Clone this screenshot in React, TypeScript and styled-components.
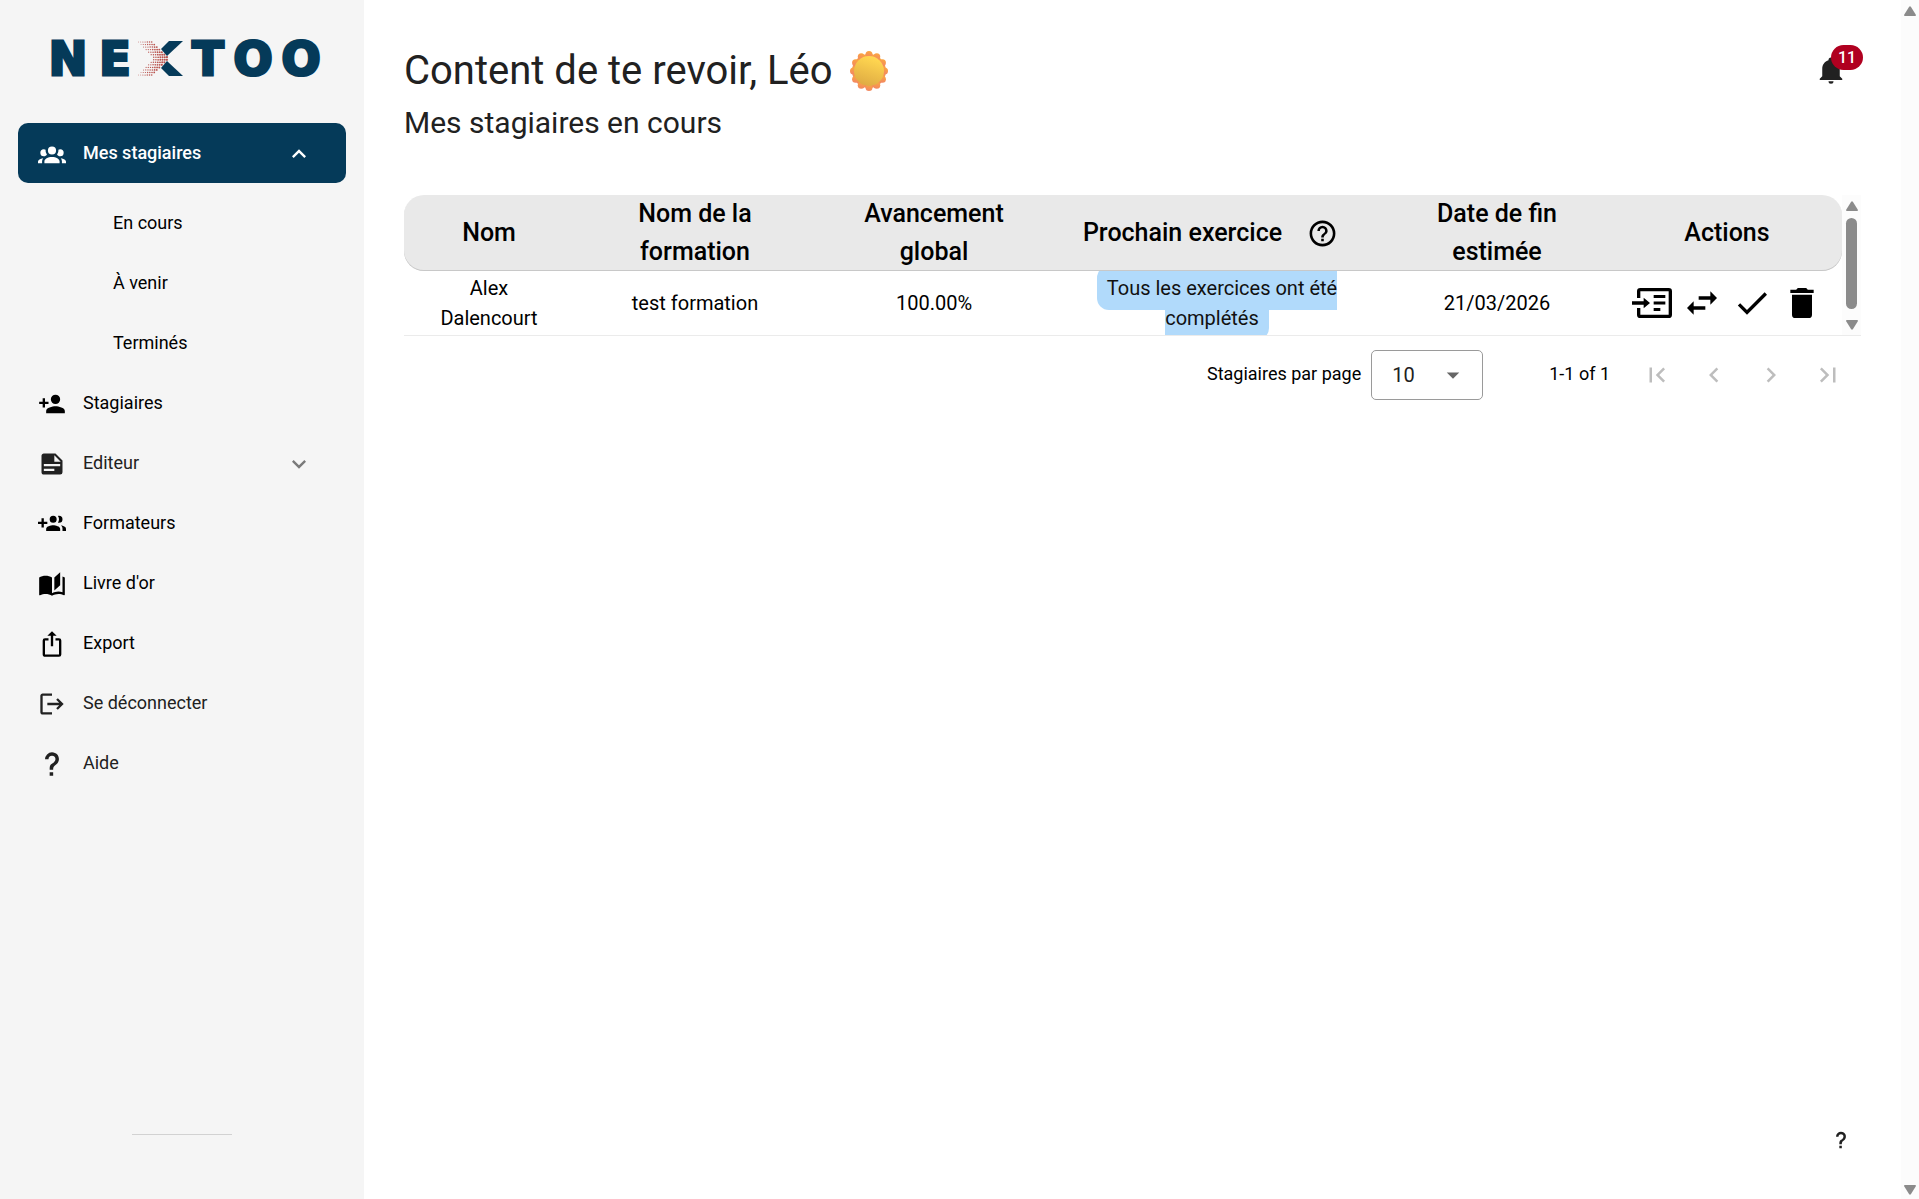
import React from "react";
import styled, { createGlobalStyle } from "styled-components";

const GlobalStyle = createGlobalStyle`
  *, *::before, *::after { box-sizing: border-box; }
  body {
    margin: 0;
    background: #ffffff;
    color: #000000;
    font-family: Roboto, "Liberation Sans", sans-serif;
    overflow: hidden;
  }
  button, select { font-family: inherit; }
`;

/* Material Design icon outlines, drawn on a 24 unit grid */
const icons = {
  group:
    "M12,5.5A3.5,3.5 0 0,1 15.5,9A3.5,3.5 0 0,1 12,12.5A3.5,3.5 0 0,1 8.5,9A3.5,3.5 0 0,1 12,5.5M5,8C5.56,8 6.08,8.15 6.53,8.42C6.38,9.85 6.8,11.27 7.66,12.38C7.16,13.34 6.16,14 5,14A3,3 0 0,1 2,11A3,3 0 0,1 5,8M19,8A3,3 0 0,1 22,11A3,3 0 0,1 19,14C17.84,14 16.84,13.34 16.34,12.38C17.2,11.27 17.62,9.85 17.47,8.42C17.92,8.15 18.44,8 19,8M5.5,18.25C5.5,16.18 8.41,14.5 12,14.5C15.59,14.5 18.5,16.18 18.5,18.25V20H5.5V18.25M0,20V18.5C0,17.11 1.89,15.94 4.45,15.6C3.86,16.28 3.5,17.22 3.5,18.25V20H0M24,20H20.5V18.25C20.5,17.22 20.14,16.28 19.55,15.6C22.11,15.94 24,17.11 24,18.5V20Z",
  accountPlus:
    "M15,14C12.33,14 7,15.33 7,18V20H23V18C23,15.33 17.67,14 15,14M6,10V7H4V10H1V12H4V15H6V12H9V10M15,12A4,4 0 0,0 19,8A4,4 0 0,0 15,4A4,4 0 0,0 11,8A4,4 0 0,0 15,12Z",
  note: "M14,10H19.5L14,4.5V10M5,3H15L21,9V19A2,2 0 0,1 19,21H5C3.89,21 3,20.1 3,19V5C3,3.89 3.89,3 5,3M5,12V14H19V12H5M5,16V18H14V16H5Z",
  groupPlus:
    "M13,13C11,13 7,14 7,16V18H19V16C19,14 15,13 13,13M19.62,13.16C20.45,13.88 21,14.82 21,16V18H24V16C24,14.46 21.63,13.5 19.62,13.16M13,11A3,3 0 0,0 16,8A3,3 0 0,0 13,5A3,3 0 0,0 10,8A3,3 0 0,0 13,11M18,11A3,3 0 0,0 21,8A3,3 0 0,0 18,5C17.68,5 17.37,5.05 17.08,5.14C17.65,5.95 18,6.94 18,8C18,9.06 17.65,10.04 17.08,10.85C17.37,10.95 17.68,11 18,11M8,10H5V7H3V10H0V12H3V15H5V12H8V10Z",
  book: "M19,2L14,6.5V17.5L19,13V2M6.5,5C4.55,5 2.45,5.4 1,6.5V21.16C1,21.41 1.25,21.66 1.5,21.66C1.6,21.66 1.65,21.59 1.75,21.59C3.1,20.94 5.05,20.5 6.5,20.5C8.45,20.5 10.55,20.9 12,22C13.35,21.15 15.8,20.5 17.5,20.5C19.15,20.5 20.85,20.81 22.25,21.56C22.35,21.61 22.4,21.59 22.5,21.59C22.75,21.59 23,21.34 23,21.09V6.5C22.4,6.05 21.75,5.75 21,5.5V19C19.9,18.65 18.7,18.5 17.5,18.5C15.8,18.5 13.35,19.15 12,20V6.5C10.55,5.4 8.45,5 6.5,5Z",
  exportUp:
    "M12,1L8,5H11V14H13V5H16M18,23H6C4.89,23 4,22.1 4,21V9A2,2 0 0,1 6,7H9V9H6V21H18V9H15V7H18A2,2 0 0,1 20,9V21A2,2 0 0,1 18,23Z",
  logout:
    "M17 7L15.59 8.41L18.17 11H8V13H18.17L15.59 15.58L17 17L22 12M4 5H12V3H4C2.9 3 2 3.9 2 5V19C2 20.1 2.9 21 4 21H12V19H4V5Z",
  help: "M10,19H13V22H10V19M12,2C17.35,2.22 19.68,7.62 16.5,11.67C15.67,12.67 14.33,13.33 13.67,14.17C13,15 13,16 13,17H10C10,15.33 10,13.92 10.67,12.92C11.33,11.92 12.67,11.33 13.5,10.67C15.92,8.43 15.32,5.26 12,5A3,3 0 0,0 9,8H6A6,6 0 0,1 12,2Z",
  up: "M7.41,15.41L12,10.83L16.59,15.41L18,14L12,8L6,14L7.41,15.41Z",
  down: "M7.41,8.58L12,13.17L16.59,8.58L18,10L12,16L6,10L7.41,8.58Z",
  helpCircle:
    "M11,18H13V16H11V18M12,2A10,10 0 0,0 2,12A10,10 0 0,0 12,22A10,10 0 0,0 22,12A10,10 0 0,0 12,2M12,20C7.59,20 4,16.41 4,12C4,7.59 7.59,4 12,4C16.41,4 20,7.59 20,12C20,16.41 16.41,20 12,20M12,6A4,4 0 0,0 8,10H10A2,2 0 0,1 12,8A2,2 0 0,1 14,10C14,12 11,11.75 11,15H13C13,12.75 16,12.5 16,10A4,4 0 0,0 12,6Z",
  enter:
    "M5,3H22A2,2 0 0,1 24,5V19A2,2 0 0,1 22,21H5A2,2 0 0,1 3,19V15H5V19H22V5H5V9H3V5A2,2 0 0,1 5,3M0,11H7V8.8L10.8,12L7,15.2V13H0V11M13,7.2H20V9H13V7.2M13,11.1H20V12.9H13V11.1M13,15H17V16.8H13V15Z",
  swap: "M21,9L17,5V8H10V10H17V13M7,11L3,15L7,19V16H14V14H7V11Z",
  check: "M21,7L9,19L3.5,13.5L4.91,12.09L9,16.17L19.59,5.59L21,7Z",
  trash: "M19,4H15.5L14.5,3H9.5L8.5,4H5V6H19M6,19A2,2 0 0,0 8,21H16A2,2 0 0,0 18,19V7H6V19Z",
  caret: "M7,10L12,15L17,10H7Z",
  first: "M18.41,16.59L13.82,12L18.41,7.41L17,6L11,12L17,18L18.41,16.59M6,6H8V18H6V6Z",
  prev: "M15.41,16.58L10.83,12L15.41,7.41L14,6L8,12L14,18L15.41,16.58Z",
  next: "M8.59,16.58L13.17,12L8.59,7.41L10,6L16,12L10,18L8.59,16.58Z",
  last: "M5.59,7.41L10.18,12L5.59,16.59L7,18L13,12L7,6L5.59,7.41M16,6H18V18H16V6Z",
  bell: "M21,19V20H3V19L5,17V11C5,7.9 7.03,5.17 10,4.29C10,4.19 10,4.1 10,4A2,2 0 0,1 12,2A2,2 0 0,1 14,4C14,4.1 14,4.19 14,4.29C16.97,5.17 19,7.9 19,11V17L21,19M14,21A2,2 0 0,1 12,23A2,2 0 0,1 10,21",
};

type IconName = keyof typeof icons;

const Svg = styled.svg`
  display: block;
  flex: none;
  fill: currentColor;
`;

const Icon = ({ name, size }: { name: IconName; size: number }) => (
  <Svg width={size} height={size} viewBox="0 0 24 24" aria-hidden="true">
    <path d={icons[name]} />
  </Svg>
);

const Shell = styled.div`
  display: flex;
  min-height: 100vh;
`;

const Sidebar = styled.aside`
  display: flex;
  flex-direction: column;
  flex: none;
  width: 364px;
  padding: 28px 18px 64px;
  background: #f5f5f5;
`;

const LogoLink = styled.a`
  display: block;
  margin: 0 0 34px 28px;
`;

const LogoSvg = styled.svg`
  display: block;
`;

const NavList = styled.ul`
  margin: 0;
  padding: 0;
  list-style: none;
`;

const SubList = styled(NavList)`
  padding-top: 10px;
`;

const NavLink = styled.a<{ $active?: boolean; $soft?: boolean }>`
  display: flex;
  align-items: center;
  gap: 17px;
  width: 100%;
  height: 60px;
  padding: 2px 33px 0 20px;
  border: 0;
  border-radius: 10px;
  background: ${(p) => (p.$active ? "#053a59" : "transparent")};
  color: ${(p) => (p.$active ? "#ffffff" : p.$soft ? "#212121" : "#000000")};
  font-size: 18px;
  font-weight: ${(p) => (p.$active ? 500 : 400)};
  text-align: left;
  text-decoration: none;
  cursor: pointer;
`;

const NavText = styled.span`
  flex: 1;
  padding-bottom: 4px;
`;

const Chevron = styled.span<{ $muted?: boolean }>`
  color: ${(p) => (p.$muted ? "#7a7a7a" : "inherit")};
`;

const SubLink = styled.a`
  display: flex;
  align-items: center;
  height: 60px;
  padding: 0 0 2px 95px;
  color: #000000;
  font-size: 18px;
  text-decoration: none;
`;

const SidebarRule = styled.hr`
  width: 100px;
  height: 1px;
  margin: auto auto 0;
  border: 0;
  background: #d2d2d2;
`;

const Main = styled.main`
  display: flex;
  flex: 1;
  flex-direction: column;
  min-width: 0;
  padding: 40px 40px 39px;
`;

const TopBar = styled.header`
  display: flex;
  align-items: flex-start;
  justify-content: space-between;
  height: 155px;
`;

const Title = styled.h1`
  display: flex;
  align-items: center;
  gap: 16px;
  margin: 0;
  color: #212121;
  font-size: 40px;
  font-weight: 400;
  line-height: 62px;
`;

const Subtitle = styled.h2`
  margin: 0;
  color: #212121;
  font-size: 30px;
  font-weight: 400;
  line-height: 41px;
`;

const BellButton = styled.button`
  position: relative;
  padding: 15px;
  border: 0;
  background: transparent;
  color: #212121;
  cursor: pointer;
`;

const Badge = styled.span`
  position: absolute;
  top: 5px;
  left: 30px;
  width: 32px;
  border-radius: 13px;
  background: #b00020;
  color: #ffffff;
  font-size: 16px;
  font-weight: 500;
  line-height: 25px;
  text-align: center;
`;

const TablePane = styled.div`
  display: flex;
  height: 141px;
  overflow: hidden;
  border-bottom: 1px solid #ebebeb;
`;

const Table = styled.table`
  flex: 1;
  width: 100%;
  height: 140px;
  table-layout: fixed;
  border-spacing: 0;
  text-align: center;
`;

const HeadCell = styled.th`
  position: relative;
  z-index: 1;
  height: 76px;
  padding: 0 20px;
  box-shadow: inset 0 -1px #c8c8c8;
  background: #e9e9e9;
  font-size: 25px;
  font-weight: 500;
  line-height: 38px;
  &:first-child { border-radius: 20px 0 0 20px; }
  &:last-child { border-radius: 0 20px 20px 0; }
`;

const HeadGroup = styled.span`
  display: flex;
  align-items: center;
  justify-content: center;
  gap: 12px;
  white-space: nowrap;
`;

const HelpButton = styled.button`
  padding: 0 13px;
  border: 0;
  background: transparent;
  color: inherit;
  cursor: pointer;
`;

const Cell = styled.td`
  height: 64px;
  padding: 0 30px;
  font-size: 20px;
  line-height: 30px;
`;

const ActionCell = styled(Cell)`
  padding: 0;
`;

const Highlight = styled.mark`
  padding: 10px;
  border-radius: 12px;
  background: #b1dafb;
  color: #111111;
`;

const Actions = styled.div`
  display: flex;
  justify-content: center;
  gap: 10px;
`;

const PlainButton = styled.button`
  padding: 0;
  border: 0;
  background: transparent;
  color: #000000;
  cursor: pointer;
`;

const ScrollTrack = styled.div`
  display: flex;
  flex: none;
  flex-direction: column;
  align-items: center;
  width: 19px;
  padding: 6px 0 5px;
  background: #fcfcfc;
`;

const ScrollThumb = styled.div`
  flex: 1;
  width: 11px;
  margin: 7px 0 11px;
  border-radius: 6px;
  background: #8b8b8b;
`;

const PageTrack = styled.div`
  display: flex;
  flex: none;
  flex-direction: column;
  justify-content: space-between;
  align-items: center;
  width: 18px;
  padding: 6px 0 4px;
  background: #fcfcfc;
`;

const Pager = styled.div`
  display: flex;
  align-items: center;
  justify-content: flex-end;
  padding: 14px 4px 0 0;
  font-size: 18px;
`;

const PagerLabel = styled.label`
  padding-bottom: 3px;
`;

const PagerRange = styled.span`
  padding-bottom: 3px;
`;

const SelectBox = styled.span`
  position: relative;
  width: 112px;
  margin: 0 66px 0 10px;
`;

const Select = styled.select`
  display: block;
  width: 100%;
  height: 50px;
  padding: 0 20px;
  border: 1px solid #9a9a9a;
  border-radius: 5px;
  background: transparent;
  color: #212121;
  font-size: 20px;
  appearance: none;
`;

const SelectArrow = styled.span`
  position: absolute;
  top: 10px;
  right: 15px;
  color: #666666;
  pointer-events: none;
`;

const PagerButtons = styled.span`
  display: flex;
  margin-left: 19px;
`;

const PagerButton = styled.button`
  width: 57px;
  padding: 0 13px;
  border: 0;
  background: transparent;
  color: #bdbdbd;
`;

const FloatHelp = styled.button`
  align-self: flex-end;
  margin-top: auto;
  padding: 10px;
  border: 0;
  background: transparent;
  color: #212121;
  cursor: pointer;
`;

const dots = Array.from({ length: 14 }, (_, i) => i);

const Logo = () => (
  <LogoSvg width="290" height="61" viewBox="0 -12 290 61" role="img" aria-label="Nextoo">
    <g
      fill="#053a59"
      stroke="#053a59"
      strokeWidth="3"
      fontFamily="'DejaVu Sans', sans-serif"
      fontWeight="700"
      fontSize="46"
      textAnchor="middle"
    >
      <text x="22" y="35">N</text>
      <text x="69" y="35">E</text>
      <text x="162" y="35">T</text>
      <text x="207" y="35">O</text>
      <text x="255" y="35">O</text>
    </g>
    <g fill="#b9544f">
      {dots.map((row) =>
        dots.slice(0, 7).map((col) => {
          const y = 2 + row * 2.54;
          const reach = 17 - Math.abs(y - 18.5);
          return (
            <circle
              key={`${row}-${col}`}
              cx={92 + reach + col * 2.2}
              cy={y}
              r={0.4 + col * 0.07 + reach * 0.02}
            />
          );
        })
      )}
    </g>
    <g fill="#053a59">
      <path d="M123 1H137L121 16L115 9Z" />
      <path d="M123 36H137L121 21L115 28Z" />
    </g>
  </LogoSvg>
);

const petals = Array.from({ length: 12 }, (_, i) => (i * Math.PI) / 6);

const Sun = () => (
  <svg width="40" height="40" viewBox="0 0 40 40" role="img" aria-label="Soleil">
    <defs>
      <linearGradient id="rays" x1="0.6" y1="0" x2="0.4" y2="1">
        <stop offset="0" stopColor="#fba63f" />
        <stop offset="1" stopColor="#f28763" />
      </linearGradient>
      <linearGradient id="disc" x1="0.7" y1="0.1" x2="0.4" y2="1">
        <stop offset="0" stopColor="#ffd650" />
        <stop offset="1" stopColor="#dfab43" />
      </linearGradient>
    </defs>
    <g fill="url(#rays)">
      <circle cx="20" cy="20" r="17" />
      {petals.map((a) => (
        <circle key={a} cx={20 + 15.5 * Math.sin(a)} cy={20 - 16.5 * Math.cos(a)} r="3.5" />
      ))}
    </g>
    <circle cx="20" cy="20" r="15" fill="url(#disc)" />
  </svg>
);

const Arrow = ({ flip }: { flip?: boolean }) => (
  <Svg width="12" height="10" viewBox="0 0 12 10" color="#8b8b8b" aria-hidden="true">
    <path
      d={
        flip
          ? "M1 0H11Q12.500 0 11.700 1.500L7 9Q6 10.500 5 9L0.300 1.500Q-0.500 0 1 0Z"
          : "M1 10H11Q12.500 10 11.700 8.500L7 1Q6 -0.500 5 1L0.300 8.500Q-0.500 10 1 10Z"
      }
    />
  </Svg>
);

const subItems = ["En cours", "À venir", "Terminés"];

const navItems: { label: string; icon: IconName; soft?: boolean; expandable?: boolean }[] = [
  { label: "Stagiaires", icon: "accountPlus" },
  { label: "Editeur", icon: "note", soft: true, expandable: true },
  { label: "Formateurs", icon: "groupPlus" },
  { label: "Livre d'or", icon: "book" },
  { label: "Export", icon: "exportUp" },
  { label: "Se déconnecter", icon: "logout", soft: true },
  { label: "Aide", icon: "help", soft: true },
];

const columnWidths = [170, 242, 236, 330, 230, 230];

const rowActions: { label: string; icon: IconName }[] = [
  { label: "Ouvrir", icon: "enter" },
  { label: "Transférer", icon: "swap" },
  { label: "Terminer", icon: "check" },
  { label: "Supprimer", icon: "trash" },
];

const pageActions: { label: string; icon: IconName }[] = [
  { label: "Première page", icon: "first" },
  { label: "Page précédente", icon: "prev" },
  { label: "Page suivante", icon: "next" },
  { label: "Dernière page", icon: "last" },
];

export default function App() {
  return (
    <>
      <GlobalStyle />
      <Shell>
        <Sidebar>
          <LogoLink href="#">
            <Logo />
          </LogoLink>
          <nav>
            <NavList>
              <li>
                <NavLink as="button" $active aria-expanded="true">
                  <Icon name="group" size={28} />
                  <NavText>Mes stagiaires</NavText>
                  <Chevron>
                    <Icon name="up" size={28} />
                  </Chevron>
                </NavLink>
                <SubList>
                  {subItems.map((label) => (
                    <li key={label}>
                      <SubLink href="#">{label}</SubLink>
                    </li>
                  ))}
                </SubList>
              </li>
              {navItems.map((item) => (
                <li key={item.label}>
                  <NavLink href="#" $soft={item.soft}>
                    <Icon name={item.icon} size={28} />
                    <NavText>{item.label}</NavText>
                    {item.expandable && (
                      <Chevron $muted>
                        <Icon name="down" size={28} />
                      </Chevron>
                    )}
                  </NavLink>
                </li>
              ))}
            </NavList>
          </nav>
          <SidebarRule />
        </Sidebar>

        <Main>
          <TopBar>
            <div>
              <Title>
                Content de te revoir, Léo <Sun />
              </Title>
              <Subtitle>Mes stagiaires en cours</Subtitle>
            </div>
            <BellButton aria-label="Notifications">
              <Icon name="bell" size={30} />
              <Badge>11</Badge>
            </BellButton>
          </TopBar>

          <TablePane>
            <Table>
              <colgroup>
                {columnWidths.map((width, i) => (
                  <col key={i} width={width} />
                ))}
              </colgroup>
              <thead>
                <tr>
                  <HeadCell>Nom</HeadCell>
                  <HeadCell>Nom de la formation</HeadCell>
                  <HeadCell>Avancement global</HeadCell>
                  <HeadCell>
                    <HeadGroup>
                      Prochain exercice
                      <HelpButton aria-label="Aide sur le prochain exercice">
                        <Icon name="helpCircle" size={31} />
                      </HelpButton>
                    </HeadGroup>
                  </HeadCell>
                  <HeadCell>Date de fin estimée</HeadCell>
                  <HeadCell>Actions</HeadCell>
                </tr>
              </thead>
              <tbody>
                <tr>
                  <Cell>Alex Dalencourt</Cell>
                  <Cell>test formation</Cell>
                  <Cell>100.00%</Cell>
                  <Cell>
                    <Highlight>Tous les exercices ont été complétés</Highlight>
                  </Cell>
                  <Cell>21/03/2026</Cell>
                  <ActionCell>
                    <Actions>
                      {rowActions.map((action) => (
                        <PlainButton key={action.label} aria-label={action.label}>
                          <Icon name={action.icon} size={40} />
                        </PlainButton>
                      ))}
                    </Actions>
                  </ActionCell>
                </tr>
              </tbody>
            </Table>
            <ScrollTrack>
              <Arrow />
              <ScrollThumb />
              <Arrow flip />
            </ScrollTrack>
          </TablePane>

          <Pager>
            <PagerLabel htmlFor="page-size">Stagiaires par page</PagerLabel>
            <SelectBox>
              <Select id="page-size" defaultValue="10">
                <option>10</option>
                <option>25</option>
                <option>50</option>
              </Select>
              <SelectArrow>
                <Icon name="caret" size={30} />
              </SelectArrow>
            </SelectBox>
            <PagerRange>1-1 of 1</PagerRange>
            <PagerButtons>
              {pageActions.map((action) => (
                <PagerButton key={action.label} aria-label={action.label} disabled>
                  <Icon name={action.icon} size={30} />
                </PagerButton>
              ))}
            </PagerButtons>
          </Pager>

          <FloatHelp aria-label="Aide">
            <Icon name="help" size={20} />
          </FloatHelp>
        </Main>

        <PageTrack>
          <Arrow />
          <Arrow flip />
        </PageTrack>
      </Shell>
    </>
  );
}
